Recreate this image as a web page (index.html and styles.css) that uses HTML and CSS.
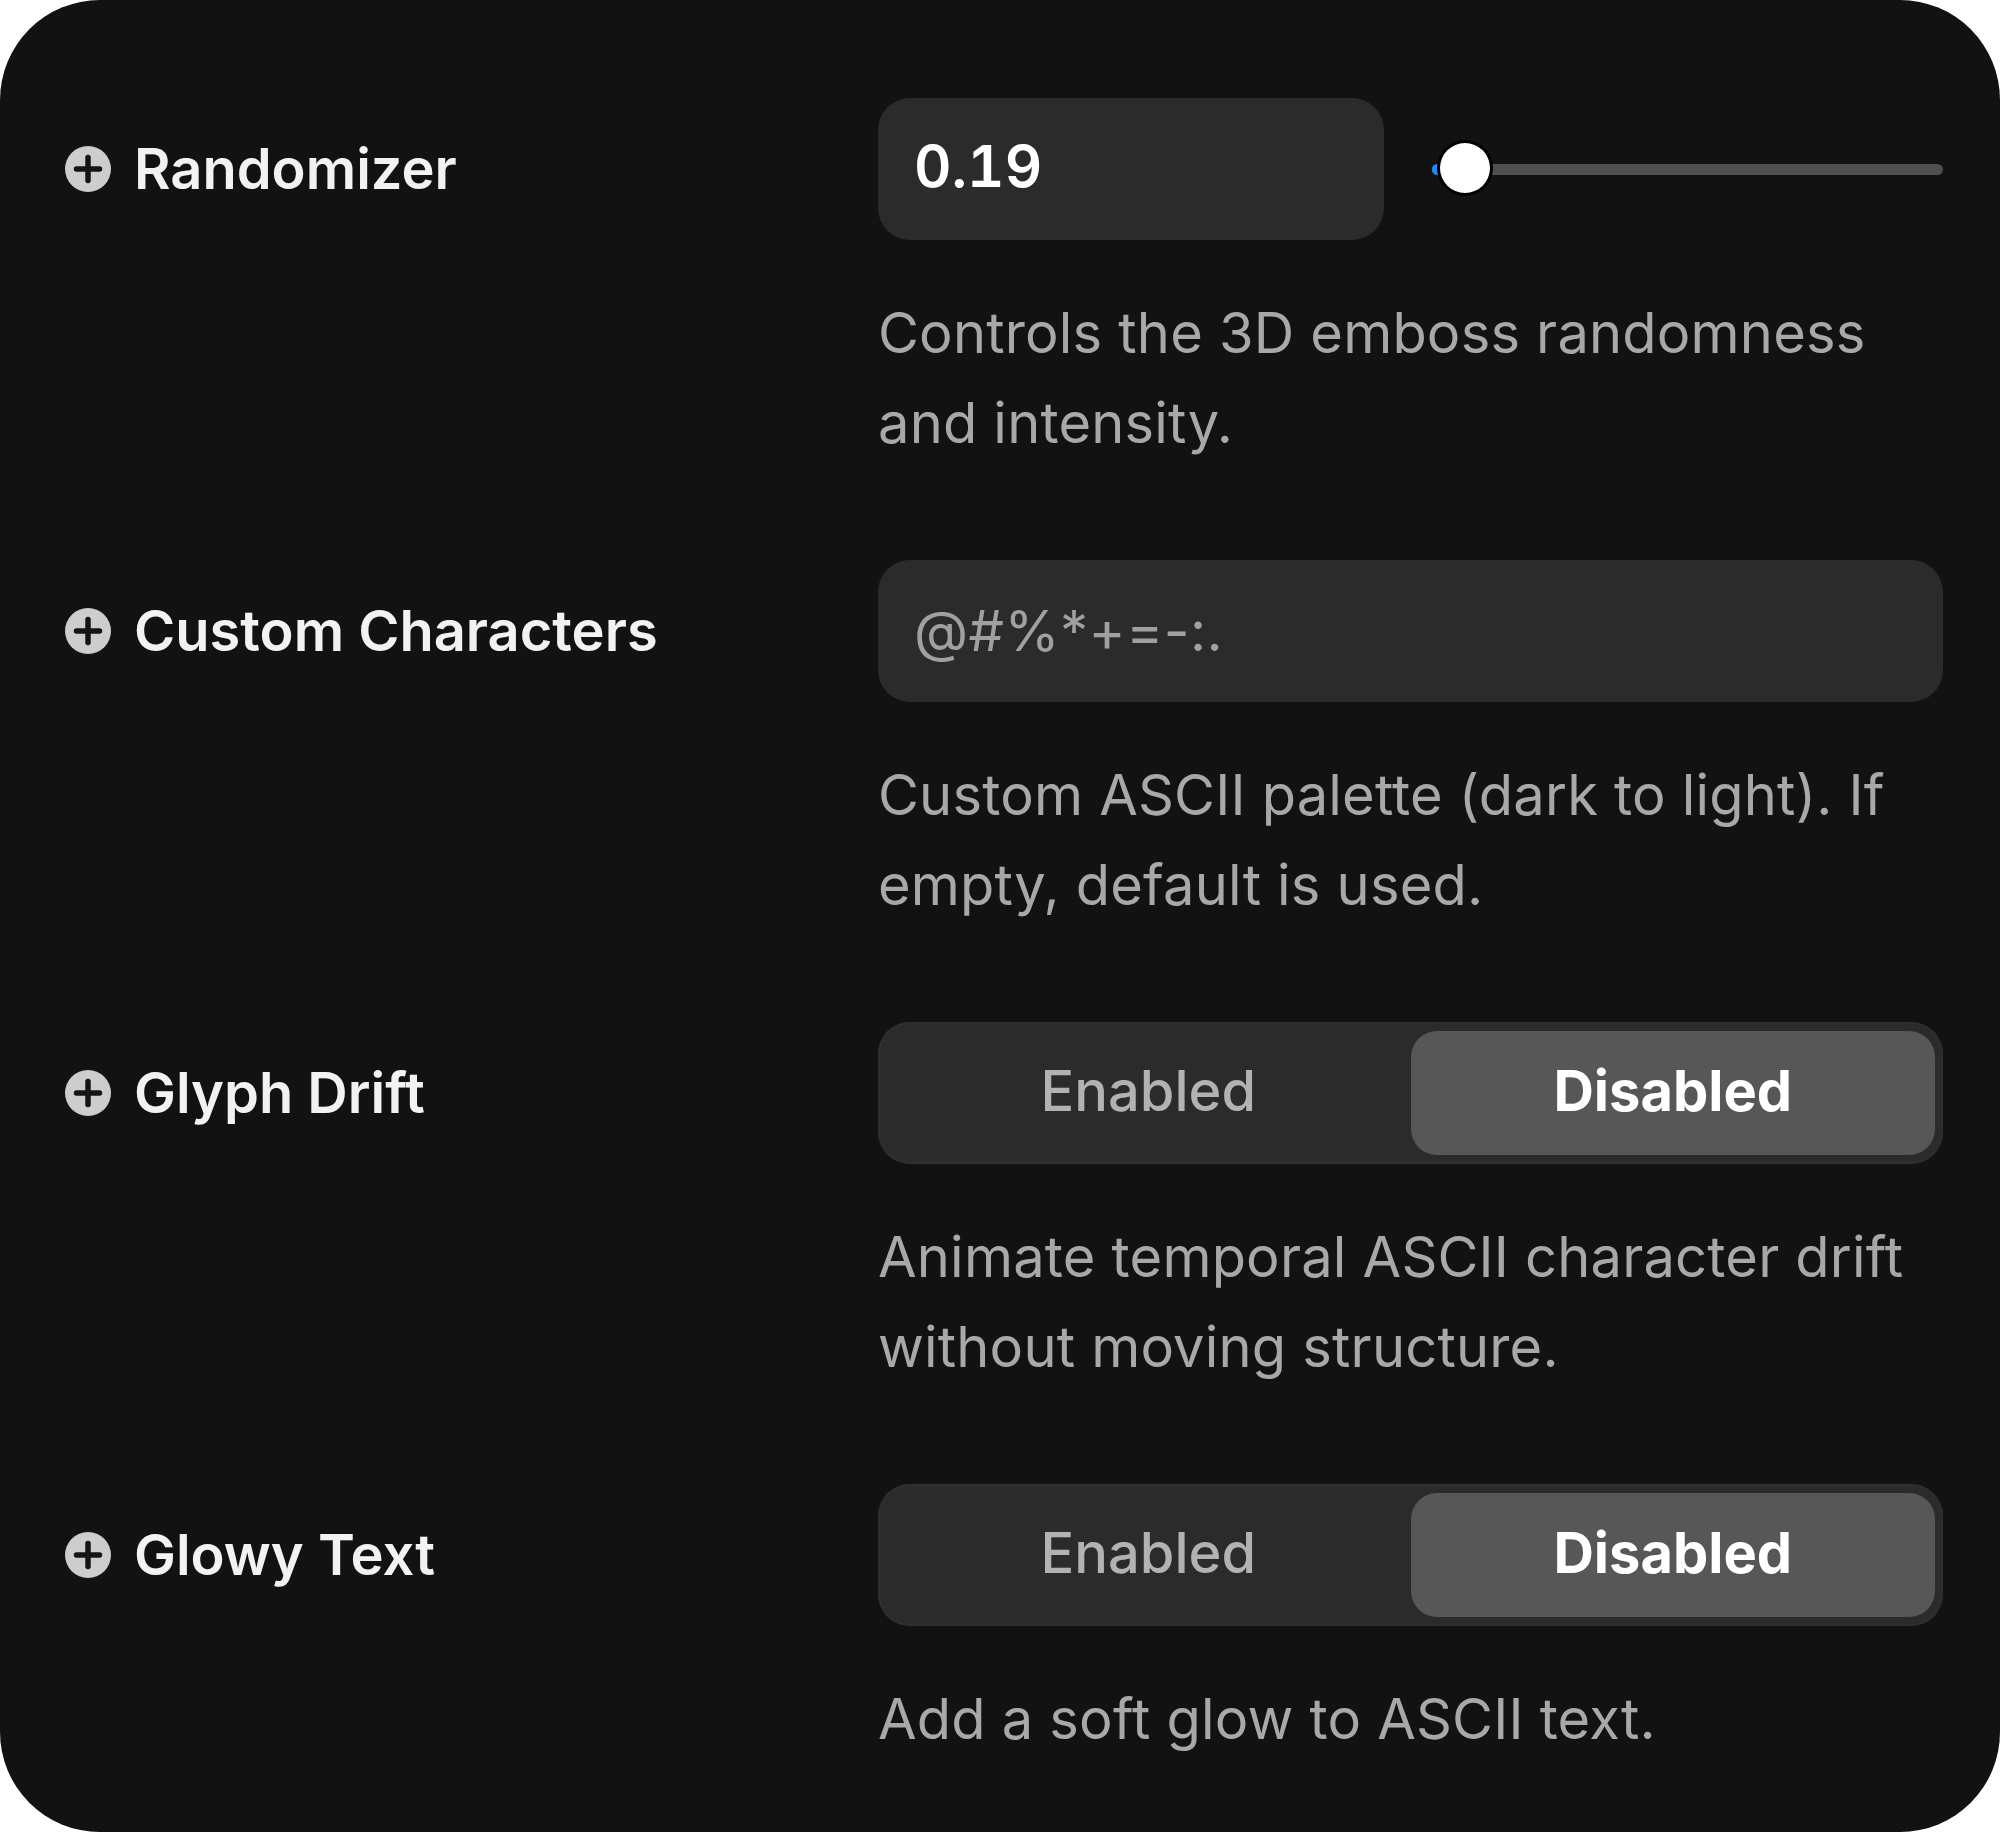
FILE: index.html
```html
<!DOCTYPE html>
<html lang="en">
<head>
<meta charset="utf-8">
<title>Settings</title>
<link rel="stylesheet" href="styles.css">
</head>
<body>
<div class="card">
  <div class="row">
    <div class="label">
      <svg class="icon" viewBox="0 0 46 46" width="46" height="46"><circle cx="23" cy="23" r="23" fill="#cdcdcd"/><path d="M23 11.5V34.5M11.5 23H34.5" stroke="#141414" stroke-width="5.5" stroke-linecap="round"/></svg>
      <span>Randomizer</span>
    </div>
    <div class="control-col">
      <div class="control slider-row">
        <div class="field value">0.19</div>
        <div class="slider">
          <div class="track"><div class="fill"></div></div>
          <div class="thumb"></div>
        </div>
      </div>
      <p class="desc">Controls the 3D emboss randomness and intensity.</p>
    </div>
  </div>

  <div class="row">
    <div class="label">
      <svg class="icon" viewBox="0 0 46 46" width="46" height="46"><circle cx="23" cy="23" r="23" fill="#cdcdcd"/><path d="M23 11.5V34.5M11.5 23H34.5" stroke="#141414" stroke-width="5.5" stroke-linecap="round"/></svg>
      <span>Custom Characters</span>
    </div>
    <div class="control-col">
      <div class="control">
        <div class="field placeholder">@#%*+=-:.</div>
      </div>
      <p class="desc">Custom ASCII palette (dark to light). If empty, default is used.</p>
    </div>
  </div>

  <div class="row">
    <div class="label">
      <svg class="icon" viewBox="0 0 46 46" width="46" height="46"><circle cx="23" cy="23" r="23" fill="#cdcdcd"/><path d="M23 11.5V34.5M11.5 23H34.5" stroke="#141414" stroke-width="5.5" stroke-linecap="round"/></svg>
      <span>Glyph Drift</span>
    </div>
    <div class="control-col">
      <div class="control segmented">
        <div class="seg">Enabled</div>
        <div class="seg active">Disabled</div>
      </div>
      <p class="desc">Animate temporal ASCII character drift without moving structure.</p>
    </div>
  </div>

  <div class="row">
    <div class="label">
      <svg class="icon" viewBox="0 0 46 46" width="46" height="46"><circle cx="23" cy="23" r="23" fill="#cdcdcd"/><path d="M23 11.5V34.5M11.5 23H34.5" stroke="#141414" stroke-width="5.5" stroke-linecap="round"/></svg>
      <span>Glowy Text</span>
    </div>
    <div class="control-col">
      <div class="control segmented">
        <div class="seg">Enabled</div>
        <div class="seg active">Disabled</div>
      </div>
      <p class="desc">Add a soft glow to ASCII text.</p>
    </div>
  </div>
</div>
</body>
</html>
```

FILE: styles.css
```css
html, body {
  margin: 0;
  padding: 0;
  background: #ffffff;
}

body {
  font-family: Inter, "Noto Sans", "Liberation Sans", sans-serif;
}

.card {
  width: 2000px;
  height: 1832px;
  box-sizing: border-box;
  background: #121212;
  border-radius: 100px;
  padding: 98px 57px 0 65px;
  display: flex;
  flex-direction: column;
  gap: 92px;
}

.row {
  display: grid;
  grid-template-columns: 813px 1fr;
}

.label {
  height: 142px;
  display: flex;
  align-items: center;
  gap: 23px;
  color: #f2f2f2;
  font-size: 56px;
  font-weight: 600;
}

.icon {
  flex: none;
  display: block;
}

.control-col {
  display: flex;
  flex-direction: column;
}

.control {
  height: 142px;
  display: flex;
}

.slider-row {
  gap: 48px;
  align-items: center;
}

.field {
  flex: 1;
  height: 142px;
  box-sizing: border-box;
  background: #2b2b2b;
  border-radius: 32px;
  padding: 0 36px;
  display: flex;
  align-items: center;
  font-size: 56px;
}

.value {
  flex: none;
  width: 506px;
  color: #ffffff;
  font-weight: 600;
  font-variant-numeric: tabular-nums;
  font-size: 58px;
  padding-bottom: 6px;
}

.placeholder {
  color: #a0a0a0;
  font-weight: 400;
  letter-spacing: 0.5px;
}

.slider {
  flex: 1;
  height: 60px;
  position: relative;
  display: flex;
  align-items: center;
}

.track {
  flex: 1;
  height: 11px;
  border-radius: 6px;
  background: #4f4f4f;
  position: relative;
  overflow: hidden;
}

.fill {
  width: 30px;
  height: 100%;
  background: #1a8cff;
}

.thumb {
  position: absolute;
  left: 8px;
  top: 4px;
  width: 50px;
  height: 50px;
  border-radius: 50%;
  background: #ffffff;
  box-shadow: 0 0 0 3px #000000;
}

.segmented {
  box-sizing: border-box;
  background: #2b2b2b;
  border-radius: 32px;
  padding: 9px 8px;
  box-shadow: inset 0 0 0 2px #2f2f2f;
}

.seg {
  flex: 1;
  display: flex;
  align-items: center;
  justify-content: center;
  font-size: 56px;
  font-weight: 500;
  color: #b2b2b2;
  border-radius: 26px;
  padding-bottom: 4px;
}

.seg.active {
  background: #575757;
  color: #ffffff;
  font-weight: 700;
}

.desc {
  margin: 48px 0 0;
  font-size: 56px;
  line-height: 90px;
  font-weight: 400;
  letter-spacing: 0.2px;
  color: #a8a8a8;
}
```
